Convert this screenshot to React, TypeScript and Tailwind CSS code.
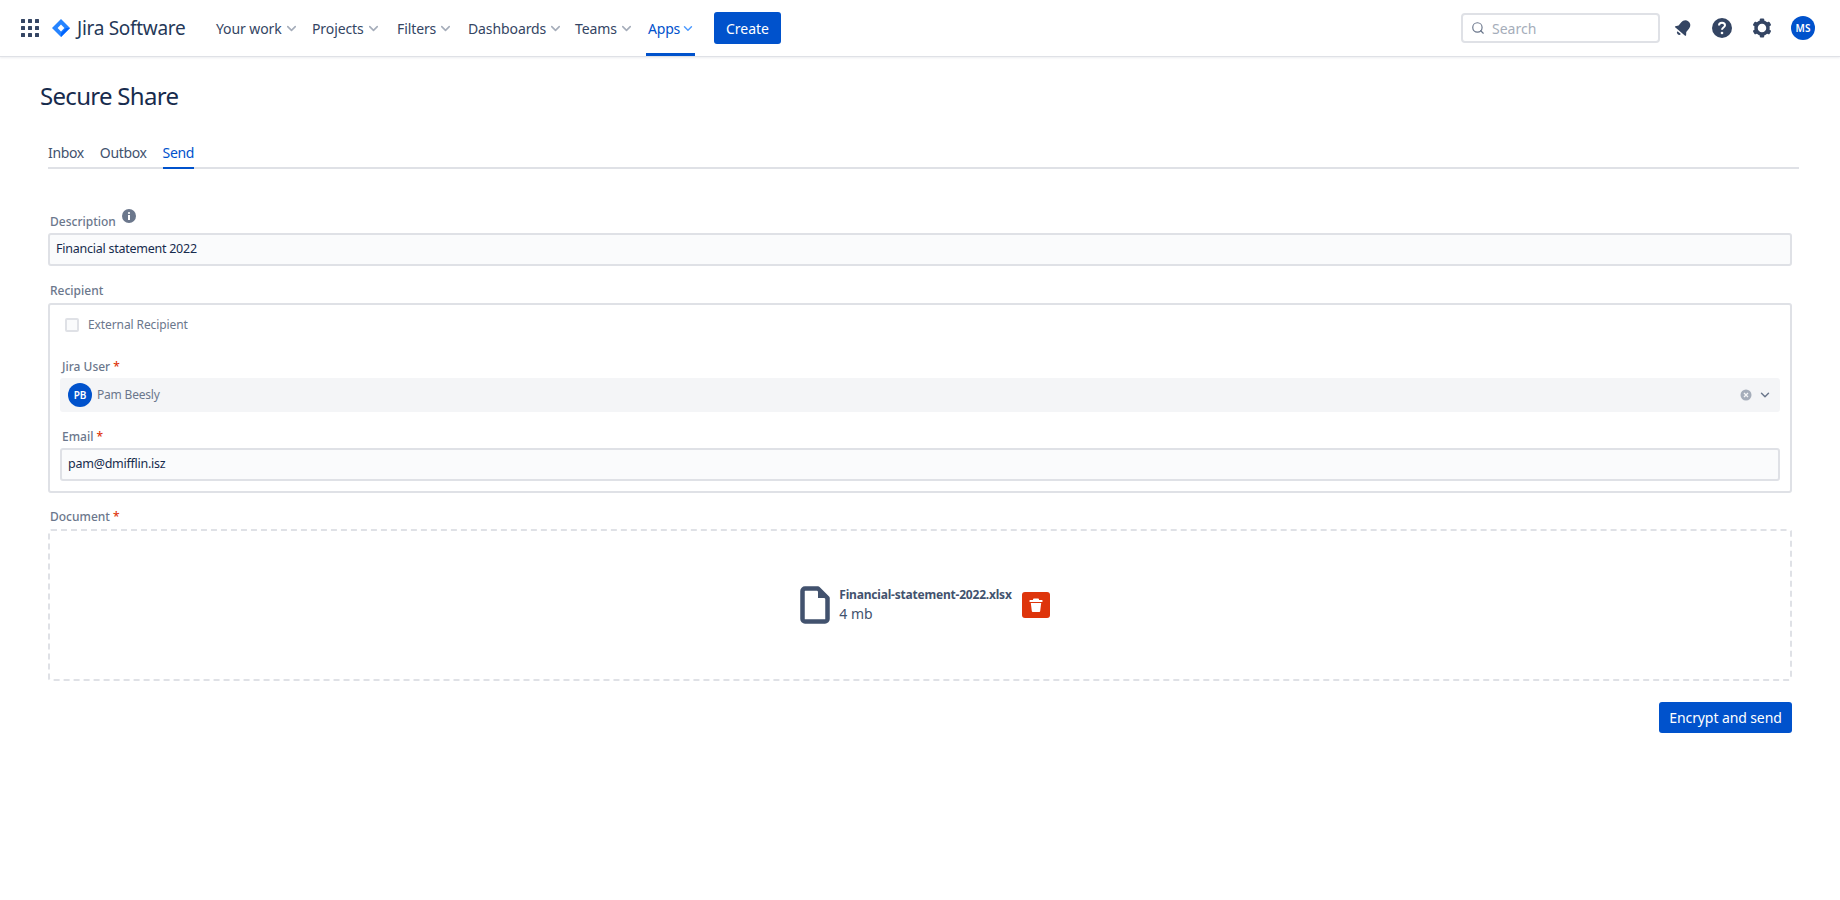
import React from 'react';
import { ChevronDown, Search } from 'lucide-react';

const navItems = [
  { label: 'Your work', width: 'w-[86px]' },
  { label: 'Projects', width: 'w-[75px]' },
  { label: 'Filters', width: 'w-[61px]' },
  { label: 'Dashboards', width: 'w-[97px]' },
  { label: 'Teams', width: 'w-[61px]' },
];

function Logo() {
  return (
    <svg width="18" height="18" viewBox="0 0 18 18" className="shrink-0">
      <path d="M9 0 L18 9 L9 18 L0 9 Z" fill="#2684ff" />
      <path d="M9 18 L18 9 L14 9 L9 14 Z" fill="#0065ff" />
      <path d="M9 5.6 L12.4 9 L9 12.4 L5.6 9 Z" fill="#fff" />
    </svg>
  );
}

function GridIcon() {
  return (
    <svg width="18" height="18" viewBox="0 0 18 18" fill="#344563" className="shrink-0">
      {[0, 7, 14].map((y) =>
        [0, 7, 14].map((x) => <rect key={`${x}-${y}`} x={x} y={y} width="4" height="4" rx="0.5" />)
      )}
    </svg>
  );
}

function Required() {
  return <span className="text-[#de350b] ml-[3px]">*</span>;
}

export default function App() {
  return (
    <div className="min-h-[900px] bg-white text-[14px] text-[#172b4d] font-['Noto_Sans',sans-serif]">
      <header className="h-[57px] flex items-center border-b border-[#dfe1e6] shadow-[0_1px_2px_rgba(9,30,66,0.08)] pl-[21px] pr-[25px]">
        <GridIcon />
        <div className="ml-[13px] w-[18px]"><Logo /></div>
        <span className="ml-[7px] w-[139px] text-[19px] text-[#253858] tracking-[-0.3px] whitespace-nowrap">Jira Software</span>
        <nav className="flex items-center h-full">
          {navItems.map((item) => (
            <div key={item.label} className={`${item.width} mr-[10px] flex items-center text-[#344563] tracking-[-0.1px] whitespace-nowrap`}>
              {item.label}
              <ChevronDown size={15} strokeWidth={2.5} className="ml-[2px] text-[#a5adba]" />
            </div>
          ))}
          <div className="relative h-full w-[49px] pl-[2px] flex items-center text-[#0052cc] tracking-[-0.2px] whitespace-nowrap">
            Apps
            <ChevronDown size={15} strokeWidth={2.5} className="ml-[1px] text-[#4c9aff]" />
            <div className="absolute left-0 right-0 bottom-0 h-[3px] bg-[#0052cc]" />
          </div>
        </nav>
        <button className="ml-[19px] h-[32px] w-[67px] rounded-[3px] bg-[#0052cc] text-white">Create</button>
        <div className="ml-auto w-[199px] h-[30px] flex items-center rounded-[4px] border-2 border-[#dfe1e6] pl-[8px]">
          <Search size={14} strokeWidth={2} className="text-[#6b778c]" />
          <span className="ml-[7px] text-[#a5adba]">Search</span>
        </div>
        <svg width="24" height="24" viewBox="0 0 24 24" fill="#344563" className="ml-[11px]">
          <g transform="rotate(40 12 12)">
            <path d="M12 3.5c-3.2 0-5 2.4-5 5.2v4.2l-2 2.6c-.3.5 0 1 .5 1h13c.5 0 .8-.5.5-1l-2-2.600V8.700c0-2.800-1.800-5.200-5-5.200z" />
            <path d="M9.800 18a2.200 2.200 0 0 0 4.400 0z" />
          </g>
        </svg>
        <svg width="24" height="24" viewBox="0 0 24 24" className="ml-[15px]">
          <circle cx="12" cy="12" r="10" fill="#344563" />
          <path d="M9 9.500c0-1.700 1.300-2.700 3-2.700s3 1 3 2.500c0 2.300-3 2.200-3 4.400" fill="none" stroke="#fff" strokeWidth="2" />
          <circle cx="12" cy="17" r="1.300" fill="#fff" />
        </svg>
        <svg width="24" height="24" viewBox="0 0 24 24" className="ml-[16px]">
          <circle cx="12" cy="12" r="6" fill="none" stroke="#344563" strokeWidth="3.500" />
          {[0, 60, 120, 180, 240, 300].map((a) => (
            <rect key={a} x="9.800" y="2.500" width="4.400" height="4" rx="1" fill="#344563" transform={`rotate(${a} 12 12)`} />
          ))}
        </svg>
        <div className="ml-[17px] w-[24px] h-[24px] rounded-full bg-[#0052cc] text-white text-[10px] font-semibold flex items-center justify-center">MS</div>
      </header>

      <main className="pl-[40px] pr-[41px]">
        <h1 className="mt-[23px] text-[24px] leading-[32px] tracking-[-0.7px] text-[#172b4d]">Secure Share</h1>

        <div className="ml-[8px] mt-[28px] flex gap-[16px] h-[29px] border-b-2 border-[#dfe1e6] text-[#42526e] tracking-[-0.35px]">
          <span className="leading-[26px]">Inbox</span>
          <span className="leading-[26px]">Outbox</span>
          <span className="relative leading-[26px] text-[#0052cc]">
            Send
            <span className="absolute left-0 right-0 -bottom-[2px] h-[2px] bg-[#0052cc]" />
          </span>
        </div>

        <div className="ml-[8px] mr-[7px]">
          <div className="mt-[43px] ml-[2px] h-[20px] flex text-[12px] font-medium text-[#6b778c] leading-[20px]">
            Description
            <svg width="14" height="14" viewBox="0 0 14 14" className="ml-[6px] -mt-[3px]">
              <circle cx="7" cy="7" r="7" fill="#6b778c" />
              <rect x="6" y="6" width="2" height="5" fill="#fff" />
              <circle cx="7" cy="4" r="1.100" fill="#fff" />
            </svg>
          </div>
          <div className="mt-[1px] h-[33px] flex items-center rounded-[3px] border-2 border-[#dfe1e6] bg-[#fafbfc] pl-[6px] text-[12.5px] tracking-[-0.25px]">
            Financial statement 2022
          </div>

          <div className="mt-[15px] ml-[2px] h-[20px] text-[12px] font-medium text-[#6b778c] leading-[20px]">Recipient</div>
          <div className="mt-[2px] h-[190px] rounded-[3px] border-2 border-[#dfe1e6] px-[10px] pt-[2px]">
            <div className="h-[36px] flex items-center pl-[5px] text-[12px] tracking-[-0.1px] text-[#6b778c]">
              <span className="w-[14px] h-[14px] rounded-[2px] border-2 border-[#dfe1e6] bg-[#fafbfc]" />
              <span className="ml-[9px]">External Recipient</span>
            </div>
            <div className="mt-[14px] ml-[2px] h-[20px] text-[12px] font-medium text-[#6b778c] leading-[20px]">
              Jira User<Required />
            </div>
            <div className="mt-[1px] h-[34px] flex items-center rounded-[3px] bg-[#f4f5f7] pl-[8px] pr-[8px] text-[12px] text-[#6b778c]">
              <span className="w-[24px] h-[24px] rounded-full bg-[#0052cc] text-white text-[10px] font-semibold flex items-center justify-center">PB</span>
              <span className="ml-[5px] tracking-[-0.2px]">Pam Beesly</span>
              <svg width="12" height="12" viewBox="0 0 12 12" className="ml-auto">
                <circle cx="6" cy="6" r="5.500" fill="#a5adba" />
                <path d="M4 4l4 4M8 4l-4 4" stroke="#f4f5f7" strokeWidth="1.300" />
              </svg>
              <ChevronDown size={14} strokeWidth={2.500} className="ml-[6px] text-[#6b778c]" />
            </div>
            <div className="mt-[15px] ml-[2px] h-[20px] text-[12px] font-medium text-[#6b778c] leading-[20px]">
              Email<Required />
            </div>
            <div className="mt-[1px] h-[33px] flex items-center rounded-[3px] border-2 border-[#dfe1e6] bg-[#fafbfc] pl-[6px] text-[12.5px] tracking-[-0.25px]">
              pam@dmifflin.isz
            </div>
          </div>

          <div className="mt-[14px] ml-[2px] h-[20px] text-[12px] font-medium text-[#6b778c] leading-[20px]">
            Document<Required />
          </div>
          <div className="mt-[2px] h-[152px] rounded-[3px] border-2 border-dashed border-[#dfe1e6] flex items-center justify-center pl-[10px]">
            <svg width="30" height="38" viewBox="0 0 30 38" fill="none" className="shrink-0">
              <path d="M5 2.500h13l9.500 9.500v21a2.500 2.500 0 0 1-2.500 2.500H5a2.500 2.500 0 0 1-2.500-2.500V5A2.500 2.500 0 0 1 5 2.500z" stroke="#42526e" strokeWidth="4.500" strokeLinejoin="round" />
              <path d="M18 1l11 11H18z" fill="#42526e" />
            </svg>
            <div className="ml-[9px] text-[#42526e]">
              <div className="text-[12px] font-bold leading-[18px] tracking-[-0.2px]">Financial-statement-2022.xlsx</div>
              <div className="text-[14px] leading-[20px]">4 mb</div>
            </div>
            <div className="ml-[10px] w-[28px] h-[26px] rounded-[3px] bg-[#de350b] flex items-center justify-center">
              <svg width="14" height="14" viewBox="0 0 14 14" fill="#fff">
                <path d="M5 0.500h4a1 1 0 0 1 1 1V2h3a.5.5 0 0 1 .5.5v1a.5.5 0 0 1-.5.5H1a.5.5 0 0 1-.5-.5v-1A.5.5 0 0 1 1 2h3v-.5a1 1 0 0 1 1-1z" />
                <path d="M1.800 5h10.400l-1 8a1 1 0 0 1-1 1H3.800a1 1 0 0 1-1-1z" />
              </svg>
            </div>
          </div>

          <div className="mt-[21px] flex justify-end">
            <button className="h-[31px] w-[133px] rounded-[3px] bg-[#0052cc] text-white tracking-[-0.1px]">Encrypt and send</button>
          </div>
        </div>
      </main>
    </div>
  );
}
